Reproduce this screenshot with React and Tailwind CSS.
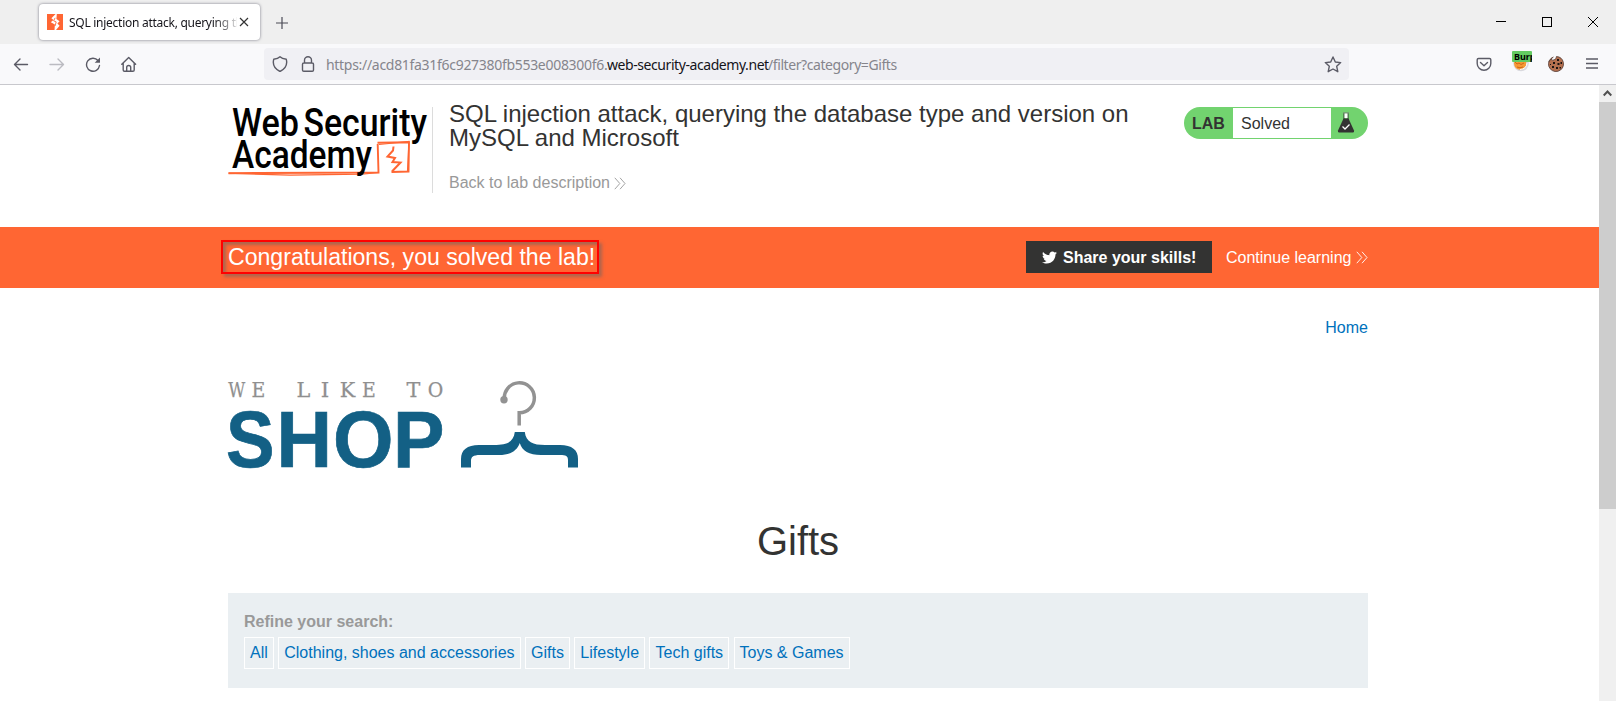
import React from "react";
import { FaTwitter } from "react-icons/fa";

const stroke = { fill: "none", stroke: "#5b5b66", strokeWidth: 1.4, strokeLinecap: "round", strokeLinejoin: "round" };

function Favicon() {
  return (
    <svg width="16" height="16" viewBox="0 0 16 16" className="shrink-0">
      <rect width="16" height="16" fill="#ff6633" />
      <path d="M8.6 0 H9.8 L9.4 5 L12.6 7.2 L10.4 9.400 L12.6 11.800 L9 16 H7.500 L7.900 10.600 L3.800 8.300 L6.400 5.900 L4.400 4.200 Z" fill="#fff" />
      <path d="M8.200 3.800 L6.600 6.800 L9.200 7.900 L8 12" fill="none" stroke="#ff6633" strokeWidth="0.9" />
    </svg>
  );
}

function TabStrip() {
  return (
    <div className="flex h-[44px] items-start bg-[#efefef]">
      <div className="mt-1 ml-[39px] flex h-[36px] w-[221px] items-center rounded-[4px] bg-white pl-2 shadow-[0_0_3px_rgba(60,60,80,0.65)]">
        <Favicon />
        <div className="mt-[2px] ml-[6px] w-[168px] overflow-hidden whitespace-nowrap font-['Noto_Sans','Open_Sans',sans-serif] text-[12px] leading-[18px] tracking-[-0.27px] text-[#15141a] [mask-image:linear-gradient(to_right,black_145px,transparent_172px)]">
          SQL injection attack, querying the
        </div>
        <svg width="10" height="10" viewBox="0 0 10 10" className="ml-[2px] shrink-0">
          <path d="M1 1 L9 9 M9 1 L1 9" stroke="#333" strokeWidth="1.2" fill="none" />
        </svg>
      </div>
      <svg width="12" height="12" viewBox="0 0 12 12" className="mt-[17px] ml-[16px]">
        <path d="M6 0 V12 M0 6 H12" stroke="#4a4a55" strokeWidth="1.2" />
      </svg>
      <div className="mt-[17px] mr-[18px] ml-auto flex gap-[36px]">
        <svg width="10" height="10" viewBox="0 0 10 10"><path d="M0 4.5 H10" stroke="#000" /></svg>
        <svg width="10" height="10" viewBox="0 0 10 10"><rect x=".5" y=".5" width="9" height="9" fill="none" stroke="#000" /></svg>
        <svg width="10" height="10" viewBox="0 0 10 10"><path d="M0 0 L10 10 M10 0 L0 10" stroke="#000" /></svg>
      </div>
    </div>
  );
}

function BurpIcon() {
  return (
    <svg width="20" height="21" viewBox="0 0 20 21">
      <circle cx="9" cy="12.500" r="7.800" fill="#d9d9de" />
      <circle cx="8.2" cy="12.500" r="6.200" fill="#f79a35" />
      <path d="M3 11 L5 13 L7 12 L9 13.500 L12 12 M5 16 Q8 17.500 11 16" stroke="#c25a10" strokeWidth="0.800" fill="none" />
      <path d="M15 12 Q14.500 18 8 18.500" stroke="#fff" strokeWidth="1" fill="none" />
      <rect width="20" height="11" rx="1" fill="#63cb62" />
      <text x="2" y="9" fontSize="9" fontWeight="700" fontFamily="Noto Sans, sans-serif">Burp</text>
    </svg>
  );
}

function CookieIcon() {
  return (
    <svg width="16" height="16" viewBox="0 0 16 16">
      <path d="M7 .6 A7.500 7.500 0 1 0 15.500 8 A7.500 7.500 0 0 0 10 .8 Q9.500 3.500 7.500 3.300 Q5.500 4.500 4.500 2.800 Q5.500 1.500 4.500 1.800 L1.300 4.500" fill="#b5704f" stroke="#5a4038" strokeWidth=".8" transform="rotate(-12 8 8)" />
      <path d="M9 3h2v2H9zM5 6h2v2H5zM9.500 7h2v2h-2zM12.500 6h1.500v2h-1.500zM4 10h2v2H4zM8 11h2v2H8zM11.500 11h1.500v1.500h-1.500zM2 8h1v1H2z" fill="#1d1412" />
    </svg>
  );
}

function Toolbar() {
  return (
    <div className="flex h-[41px] items-start border-b border-[#c8c8cd] bg-[#f9f9fb]">
      <div className="mt-[12px] ml-[13px] flex gap-[20px]">
        <svg width="16" height="16" viewBox="0 0 16 16"><path d="M14.500 8.500 H1.500 M7 3 L1.500 8.500 L7 14" {...stroke} /></svg>
        <svg width="16" height="16" viewBox="0 0 16 16"><path d="M1 8.500 H14.500 M9 3 L14.500 8.500 L9 14" {...stroke} stroke="#bbbbc1" /></svg>
        <svg width="16" height="16" viewBox="0 0 16 16">
          <path d="M13 4.500 A6.500 6.500 0 1 0 14.500 9.500" {...stroke} />
          <path d="M15 1.500 V6.800 H9.700 Z" fill="#5b5b66" />
        </svg>
        <svg width="16" height="16" viewBox="0 0 16 16">
          <path d="M.8 8.300 L7.700 1.500 L14.600 8.300 M2.200 7 V14 Q2.200 15.300 3.500 15.300 H11.900 Q13.200 15.300 13.200 14 V7 M5.700 15 V11.300 Q5.700 9.500 7.700 9.500 Q9.700 9.500 9.700 11.300 V15" {...stroke} />
        </svg>
      </div>
      <div className="mt-1 ml-[127px] flex h-[32px] w-[1085px] rounded-[4px] bg-[#f0f0f4] pt-2 pl-2">
        <svg width="16" height="16" viewBox="0 0 16 16"><path d="M8 .8 C9.500 2.300 12 3 14.300 3.300 C15.600 8.500 13 13 8 15.500 C3 13 .4 8.500 1.700 3.300 C4 3 6.500 2.300 8 .8 Z" {...stroke} /></svg>
        <svg width="16" height="16" viewBox="0 0 16 16" className="ml-3"><path d="M4.500 7 V4.300 A3.500 3.500 0 0 1 11.500 4.300 V7 M3.800 7 H12.200 Q13.500 7 13.500 8.300 V14 Q13.500 15.300 12.200 15.300 H3.800 Q2.500 15.300 2.500 14 V8.300 Q2.500 7 3.800 7 Z" {...stroke} /></svg>
        <div className="mt-px ml-[10px] flex font-['Noto_Sans','Open_Sans',sans-serif] text-[14px] leading-[16px] whitespace-nowrap text-[#85858c]">
          <span className="w-[281px] tracking-[-0.3px]">https://acd81fa31f6c927380fb553e008300f6.</span>
          <span className="w-[161px] tracking-[-0.43px] text-[#15141a]">web-security-academy.net</span>
          <span className="tracking-[-0.42px]">/filter?category=Gifts</span>
        </div>
        <svg width="18" height="18" viewBox="0 0 18 18" className="mr-[7px] ml-auto"><path d="M9 1 L11.300 6 L16.700 6.600 L12.700 10.300 L13.800 15.700 L9 13 L4.200 15.700 L5.300 10.300 L1.300 6.600 L6.700 6 Z" {...stroke} /></svg>
      </div>
      <svg width="16" height="16" viewBox="0 0 16 16" className="mt-[12px] ml-[127px]">
        <path d="M2.500 2.500 H13.500 Q14.800 2.500 14.800 3.800 V7.500 A6.500 6.500 0 0 1 1.200 7.500 V3.800 Q1.200 2.500 2.500 2.500 Z M4.500 6.500 L8 9.700 L11.500 6.500" {...stroke} />
      </svg>
      <div className="mt-[7px] ml-[20px]"><BurpIcon /></div>
      <div className="mt-[12px] ml-[16px]"><CookieIcon /></div>
      <svg width="12" height="11" viewBox="0 0 12 11" className="mt-[14px] ml-[22px]"><path d="M0 1 H12 M0 5.500 H12 M0 10 H12" stroke="#5b5b66" strokeWidth="1.300" /></svg>
    </div>
  );
}

function AcademyLogo() {
  return (
    <svg width="204" height="90" viewBox="228 102 204 90" className="overflow-visible">
      <path d="M228.500 173.300 L260 173 L378.500 172.500 L377.700 144 M377.500 142.700 L409 142.300 L408.500 171.500 L391.500 172" fill="none" stroke="#ff6633" strokeWidth="1.900" />
      <path d="M228.500 173.200 L290 175.200 L362 174.200 L379 172.500 M379 144.500 L409 141.500 L407.500 171" fill="none" stroke="#ff6633" strokeWidth="1.200" />
      <path d="M393.500 146.500 L393 150.500 L387.500 156.500 L395 158 L392.500 162 L400.500 162.500 L392 171.500" fill="none" stroke="#ff6633" strokeWidth="2" />
      <g fontFamily="Roboto, sans-serif" fontWeight="500" fontSize="38.5" fill="#000">
        <text x="232" y="135.700" textLength="67" lengthAdjust="spacingAndGlyphs">Web</text>
        <text x="303.500" y="135.700" textLength="123.500" lengthAdjust="spacingAndGlyphs">Security</text>
        <text x="232" y="168" textLength="140" lengthAdjust="spacingAndGlyphs">Academy</text>
      </g>
    </svg>
  );
}

function Chevrons() {
  return (
    <svg width="12" height="13" viewBox="0 0 12 13"><path d="M.8 .8 L5.800 6.500 L.8 12.200 M6 .8 L11 6.500 L6 12.200" fill="none" stroke="currentColor" strokeWidth=".9" /></svg>
  );
}

function LabStatus() {
  return (
    <div className="mt-[5px] flex h-[32px] w-[184px] items-stretch overflow-hidden rounded-full bg-[#72d36f] py-px">
      <span className="w-[49px] pl-[8px] text-[16px] leading-[32px] font-bold">LAB</span>
      <span className="w-[98px] bg-white pl-[8px] text-[16px] leading-[31px]">Solved</span>
      <svg width="18" height="22" viewBox="0 0 18 22" className="mt-[4px] ml-[6px]">
        <path d="M6 1 H12" stroke="#777" strokeWidth="1" fill="none" />
        <path d="M7 1.500 V8 M11 1.500 V8" stroke="#333332" strokeWidth="1" fill="none" />
        <rect x="7.500" y="1.500" width="3" height="4.500" fill="#fff" />
        <path d="M6.500 6.500 H11.500 L17 18.500 Q17.500 20.500 16 20.500 H2 Q.5 20.500 1 18.500 Z" fill="#333332" />
        <path d="M5.500 14.500 L8 17 L12.500 12.500" stroke="#fff" strokeWidth="1.300" fill="none" />
      </svg>
    </div>
  );
}

const tagline = [
  ["W", 236.700, 17], ["E", 258.500, 13.800], ["L", 303.300, 13.800], ["I", 325, 8.5],
  ["K", 347.500, 15.500], ["E", 369, 13.800], ["T", 413.500, 13.800], ["O", 435.500, 15.500],
];
const shop = [["S", 226, 48.500], ["H", 276.500, 55.500], ["O", 333, 60.500], ["P", 393, 51.500]];

function ShopLogo() {
  return (
    <svg width="352" height="94" viewBox="228 378 352 94" className="overflow-visible">
      <g fontFamily="DejaVu Serif, serif" fontSize="20.500" fill="#8f8f8f" stroke="#8f8f8f" strokeWidth="0.250">
        {tagline.map(([c, x, w]) => (
          <text key={x} x={x - w / 2} y="396.800" textLength={w} lengthAdjust="spacingAndGlyphs">{c}</text>
        ))}
      </g>
      <g fontFamily="Liberation Sans, Arial, sans-serif" fontWeight="700" fontSize="79.500" fill="#136085" stroke="#136085" strokeWidth="0.700">
        {shop.map(([c, x, w]) => (
          <text key={x} x={x} y="467.300" textLength={w} lengthAdjust="spacingAndGlyphs">{c}</text>
        ))}
      </g>
      <path d="M504.500 400 A15 15 0 1 1 519.200 412.800 V425.500" fill="none" stroke="#929292" strokeWidth="3.500" />
      <circle cx="504" cy="399.700" r="3.700" fill="#929292" />
      <path d="M514.800 432 H524.800 C526 442 533 445 545 445 L560 445 C572 445 578 450 578 459 V467.500 H568 V460 C568 456 566 455 560 455 H541 C529 455 522 451 519.800 443 C517 451 510 455 499 455 H480 C473 455 471 457 471 461 V467.500 H461 V459 C461 450 467 445 479 445 H494 C507 445 513.500 442 514.800 432 Z" fill="#136085" />
    </svg>
  );
}

const categories = ["All", "Clothing, shoes and accessories", "Gifts", "Lifestyle", "Tech gifts", "Toys & Games"];

function Page() {
  return (
    <div className="flex-1 overflow-hidden">
      <header className="flex h-[142px] pt-[17px] pl-[228px]">
        <AcademyLogo />
        <div className="mt-[5px] h-[86px] w-px bg-[#dcdcdc]" />
        <div className="ml-[16px] w-[735px]">
          <h2 className="w-[700px] text-[24px] leading-[24px]">SQL injection attack, querying the database type and version on MySQL and Microsoft</h2>
          <a className="mt-[21px] flex items-center gap-[4px] text-[16px] leading-[24px] text-[#999]">Back to lab description <Chevrons /></a>
        </div>
        <LabStatus />
      </header>
      <section className="flex h-[61px] bg-[#ff6633] pl-[221px] text-white">
        <div className="mt-[13px] h-[34px] w-[378px] border-2 border-[#ff0000] pl-[5px] text-[23.1px] leading-[30px] whitespace-nowrap shadow-[3px_3px_3px_rgba(110,100,100,0.55),inset_3px_3px_3px_rgba(110,100,100,0.55)]">
          Congratulations, you solved the lab!
        </div>
        <div className="mt-[14px] ml-[427px] flex h-[32px] w-[186px] items-center bg-[#333332] pl-[16px] text-[16px] leading-[32px] font-bold">
          <FaTwitter className="mr-[6px] size-[15px]" />
          <span className="pt-px">Share your skills!</span>
        </div>
        <a className="mt-[15px] ml-[14px] flex h-[32px] items-center gap-[5px] text-[16px]">
          Continue learning
          <span className="-mt-[2px]"><Chevrons /></span>
        </a>
      </section>
      <main className="ml-[228px] w-[1140px]">
        <nav className="pt-[28px] text-right text-[16px] leading-[24px] text-[#0071bc]">Home</nav>
        <div className="mt-[38px] h-[94px]"><ShopLogo /></div>
        <h1 className="mt-[45px] text-center text-[40px] leading-[48px]">Gifts</h1>
        <section className="mt-[28px] h-[95px] bg-[#eaeff2] pt-[17px] pl-[16px]">
          <div className="text-[16px] leading-[24px] font-bold text-[#999]">Refine your search:</div>
          <div className="mt-[3px] flex gap-[4.45px]">
            {categories.map((c) => (
              <a key={c} className="h-[32px] border border-white px-[5px] text-[16px] leading-[30px] whitespace-nowrap text-[#0071bc]">{c}</a>
            ))}
          </div>
        </section>
      </main>
    </div>
  );
}

export default function App() {
  return (
    <div className="flex h-[701px] w-[1616px] flex-col overflow-hidden bg-white font-['Liberation_Sans',Arial,sans-serif] text-[#333332]">
      <TabStrip />
      <Toolbar />
      <div className="flex min-h-0 flex-1">
        <Page />
        <div className="w-[17px] bg-[#f0f0f0]">
          <div className="flex h-[17px] items-center justify-center">
            <svg width="9" height="7" viewBox="0 0 9 7"><path d="M.7 5.500 L4.500 1.500 L8.300 5.500" fill="none" stroke="#505050" strokeWidth="2" /></svg>
          </div>
          <div className="h-[407px] bg-[#cdcdcd]" />
        </div>
      </div>
    </div>
  );
}
